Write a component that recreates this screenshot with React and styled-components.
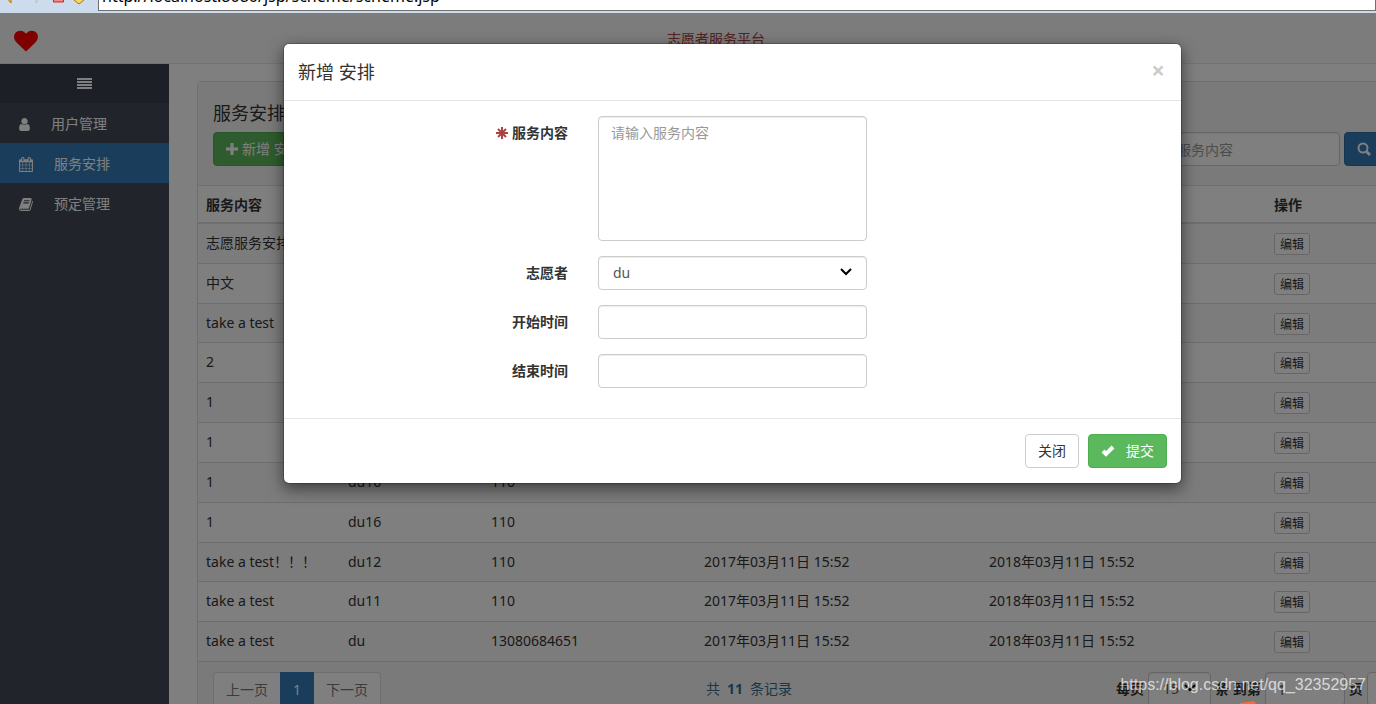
import { useState } from "react";
import styled, { createGlobalStyle, css } from "styled-components";

const GlobalStyled = createGlobalStyle`
* {
  margin: 0;
  padding: 0;
  box-sizing: border-box;
}
body {
  overflow: hidden;
  font-family: "Noto Sans", "Noto Sans CJK SC", sans-serif;
  font-size: 14px;
  line-height: 20px;
  color: #333333;
  background-color: #ffffff;
}
button, input, select, textarea {
  font: inherit;
  color: inherit;
}
`;

const Shell = styled.div`
  display: flex;
  flex-direction: column;
  height: 100vh;
  overflow: hidden;
`;

/* browser strip */
const AddressBar = styled.div`
  display: flex;
  align-items: flex-end;
  flex: none;
  height: 13px;
  padding-bottom: 2px;
  overflow: hidden;
  background-color: #cddcec;
`;
const BarIcons = styled.svg`
  flex: none;
  width: 98px;
  height: 11px;
`;
const Address = styled.input`
  flex: 1;
  height: 28px;
  padding: 0 3px 2px;
  border: 1px solid #707070;
  background-color: #ffffff;
  color: #000000;
  font-size: 16px;
`;

/* page */
const Viewport = styled.div`
  position: relative;
  flex: 1;
  min-height: 0;
  overflow: hidden;
`;
const Page = styled.div`
  display: flex;
  flex-direction: column;
  width: calc(100% + 90px);
  height: 100%;
`;
const TopBar = styled.header`
  display: flex;
  align-items: center;
  flex: none;
  height: 51px;
  padding: 2px 88px 0 14px;
  background-color: #f8f8f8;
  border-bottom: 1px solid #e7e7e7;
`;
const Brand = styled.a`
  display: flex;
  padding: 3px 16px 0 0;
  color: #ff0000;
`;
const SiteTitle = styled.h1`
  flex: 1;
  text-align: center;
  font-size: 14px;
  font-weight: normal;
  color: #a94442;
`;
const Columns = styled.div`
  display: flex;
  flex: 1;
  min-height: 0;
`;
const Sidebar = styled.nav`
  flex: none;
  width: 169px;
  background-color: #434b57;
`;
const SidebarToggle = styled.button`
  display: flex;
  justify-content: center;
  align-items: center;
  width: 100%;
  height: 39px;
  border: none;
  background-color: #38404d;
  color: #ffffff;
`;
const SideLink = styled.a`
  display: flex;
  align-items: center;
  gap: 21px;
  height: 40px;
  padding: 2px 0 0 19px;
  color: #ffffff;
  text-decoration: none;
  background-color: ${(props) => (props.$active ? "#337ab7" : "#434b57")};
`;
const Main = styled.main`
  flex: 1;
  padding: 17px 28px 0;
`;
const Panel = styled.section`
  border: 1px solid #dddddd;
  border-radius: 4px;
`;
const PanelHeading = styled.div`
  padding: 21px 15px 19px;
  background-color: #f5f5f5;
`;
const PanelTitle = styled.h2`
  margin-bottom: 9px;
  font-size: 18px;
  font-weight: normal;
`;
const Tools = styled.div`
  display: flex;
  justify-content: space-between;
`;
const Search = styled.form`
  display: flex;
  gap: 4px;
  width: 300px;
`;

const Button = styled.button`
  display: inline-flex;
  justify-content: center;
  align-items: center;
  flex: none;
  gap: 4px;
  height: 34px;
  padding: 0 12px;
  border: 1px solid #cccccc;
  border-radius: 4px;
  background-color: #ffffff;
  cursor: pointer;

  ${(props) =>
    props.$width &&
    css`
      justify-content: flex-start;
      width: ${props.$width};
    `}
  ${(props) =>
    props.$kind === "success" &&
    css`
      color: #ffffff;
      background-color: #5cb85c;
      border-color: #4cae4c;
    `}
  ${(props) =>
    props.$kind === "primary" &&
    css`
      color: #ffffff;
      background-color: #337ab7;
      border-color: #2e6da4;
    `}
  ${(props) =>
    props.$small &&
    css`
      height: 22px;
      padding: 2px 5px 0;
      border-radius: 3px;
      font-size: 12px;
      line-height: 18px;
    `}
`;

const field = css`
  width: ${(props) => props.$width || "100%"};
  height: 34px;
  padding: 6px 12px;
  border: 1px solid #cccccc;
  border-radius: 4px;
  background-color: #ffffff;
  color: #555555;
  box-shadow: inset 0 1px 1px rgba(0, 0, 0, 0.075);

  &::placeholder {
    color: #999999;
  }
`;
const Input = styled.input`
  ${field}
`;
const TextArea = styled.textarea`
  ${field}
  display: block;
  height: 125px;
  resize: none;
`;
const SelectBox = styled.div`
  position: relative;
  display: flex;
`;
const Select = styled.select`
  ${field}
  padding: 0 14px;
  appearance: none;
`;
const Arrow = styled.svg`
  position: absolute;
  top: 11px;
  right: 14px;
  width: 14px;
  height: 10px;
  pointer-events: none;
`;

const Table = styled.table`
  width: 100%;
  height: 477px;
  table-layout: fixed;
  border-collapse: collapse;
  border-top: 1px solid #dddddd;
`;
const Th = styled.th`
  width: ${(props) => props.$width};
  padding: 9px 8px 7px;
  text-align: left;
  border-bottom: 2px solid #dddddd;
`;
const Row = styled.tr`
  &:nth-child(odd) {
    background-color: #f9f9f9;
  }
`;
const Td = styled.td`
  padding: 9px 8px 7px;
  vertical-align: top;
  white-space: nowrap;
  border-bottom: 1px solid #dddddd;
`;
const EditCell = styled(Td)`
  line-height: 0;
`;

const PanelFooter = styled.div`
  display: flex;
  padding: 10px 15px;
  background-color: #f5f5f5;
`;
const Pager = styled.div`
  display: flex;
  flex: none;
  width: 493px;
`;
const PageLink = styled.a`
  height: 34px;
  padding: 7px 12px 5px;
  text-decoration: none;
  color: ${(props) => (props.$active ? "#ffffff" : "#777777")};
  background-color: ${(props) => (props.$active ? "#337ab7" : "#ffffff")};
  border: 1px solid ${(props) => (props.$active ? "#337ab7" : "#dddddd")};

  &:first-child {
    border-right: none;
    border-radius: 4px 0 0 4px;
  }
  &:last-child {
    border-left: none;
    border-radius: 0 4px 4px 0;
  }
`;
const Total = styled.p`
  display: flex;
  flex: none;
  gap: 7px;
  width: 410px;
  padding-top: 7px;
  color: #31708f;
`;
const PageSize = styled.div`
  display: flex;
  align-items: center;
  flex: none;
  gap: 4px;
`;
const PageLabel = styled.label`
  font-weight: bold;
`;

/* dialog */
const Overlay = styled.div`
  position: absolute;
  top: 0;
  left: 0;
  width: calc(100% + 89px);
  height: 100%;
  background-color: rgba(0, 0, 0, 0.5);
`;
const Dialog = styled.div`
  width: 899px;
  margin: 30px auto;
  border: 1px solid rgba(0, 0, 0, 0.2);
  border-radius: 6px;
  background-color: #ffffff;
  background-clip: padding-box;
  box-shadow: 0 5px 15px rgba(0, 0, 0, 0.5);
`;
const DialogHeader = styled.div`
  display: flex;
  justify-content: space-between;
  align-items: center;
  padding: 15px 15px 15px 14px;
  border-bottom: 1px solid #e5e5e5;
`;
const DialogTitle = styled.h2`
  font-size: 18px;
  line-height: 26px;
  font-weight: normal;
`;
const Close = styled.button`
  height: 26px;
  padding: 0 1px 5px;
  border: none;
  background: none;
  font-size: 24px;
  line-height: 21px;
  font-weight: bold;
  color: #000000;
  opacity: 0.2;
  cursor: pointer;
`;
const DialogBody = styled.div`
  padding: 15px 0;
`;
const FormRow = styled.div`
  display: grid;
  grid-template-columns: repeat(3, 1fr);
  margin-bottom: 15px;
`;
const Label = styled.label`
  display: flex;
  justify-content: flex-end;
  align-items: flex-start;
  gap: 4px;
  padding: 7px 15px 0;
  font-weight: bold;
`;
const Control = styled.div`
  padding: 0 15px;
`;
const Star = styled.svg`
  width: 12px;
  height: 12px;
  margin-top: 4px;
`;
const DialogFooter = styled.div`
  display: flex;
  justify-content: flex-end;
  gap: 9px;
  padding: 15px 14px 15px 15px;
  border-top: 1px solid #e5e5e5;
`;
const ButtonText = styled.span`
  padding-left: 7px;
`;

const Watermark = styled.div`
  position: absolute;
  right: 10px;
  bottom: 9px;
  font-family: "Liberation Sans", sans-serif;
  font-size: 16px;
  color: rgba(255, 255, 255, 0.7);
`;
const Sliver = styled.svg`
  position: absolute;
  right: 119px;
  bottom: 0;
  width: 17px;
  height: 3px;
`;

const icons = {
  heart: {
    box: "0 0 1792 1792",
    width: 24,
    height: 24,
    d: "M896 1664q-26 0-44-18l-624-602q-10-8-27.5-26t-55.5-65.5-68-97.5-53.5-121-23.5-138q0-220 127-344t351-124q62 0 126.5 21.5t120 58 95.5 68.5 76 68q36-36 76-68t95.5-68.5 120-58 126.5-21.5q224 0 351 124t127 344q0 221-229 450l-623 600q-18 18-44 18z",
  },
  user: {
    box: "256 0 1280 1792",
    width: 11,
    height: 15,
    d: "M1536 1399q0 109-62.5 187t-150.5 78h-854q-88 0-150.5-78t-62.5-187q0-85 8.5-160.5t31.5-152 58.5-131 94-89 134.5-34.5q131 128 313 128t313-128q76 0 134.5 34.5t94 89 58.5 131 31.5 152 8.5 160.5zm-256-887q0 159-112.5 271.5t-271.5 112.5-271.5-112.5-112.5-271.5 112.5-271.5 271.5-112.5 271.5 112.5 112.5 271.5z",
  },
  calendar: {
    box: "64 0 1664 1792",
    width: 14,
    height: 15,
    d: "M192 1664h288v-288h-288v288zm352 0h320v-288h-320v288zm-352-352h288v-320h-288v320zm352 0h320v-320h-320v320zm-352-384h288v-288h-288v288zm736 736h320v-288h-320v288zm-384-736h320v-288h-320v288zm768 736h288v-288h-288v288zm-384-352h320v-320h-320v320zm-352-864v-288q0-13-9.5-22.5t-22.5-9.5h-64q-13 0-22.5 9.5t-9.5 22.5v288q0 13 9.5 22.5t22.5 9.5h64q13 0 22.5-9.5t9.5-22.5zm736 864h288v-320h-288v320zm-384-384h320v-288h-320v288zm384 0h288v-288h-288v288zm32-480v-288q0-13-9.5-22.5t-22.5-9.5h-64q-13 0-22.5 9.5t-9.5 22.5v288q0 13 9.5 22.5t22.5 9.5h64q13 0 22.5-9.5t9.5-22.5zm384-64v1280q0 52-38 90t-90 38h-1408q-52 0-90-38t-38-90v-1280q0-52 38-90t90-38h128v-96q0-66 47-113t113-47h64q66 0 113 47t47 113v96h384v-96q0-66 47-113t113-47h64q66 0 113 47t47 113v96h128q52 0 90 38t38 90z",
  },
  book: {
    box: "64 0 1664 1792",
    width: 14,
    height: 15,
    d: "M1703 478q40 57 18 129l-275 906q-19 64-76.5 107.5t-122.5 43.5h-923q-77 0-148.5-53.5t-99.5-131.5q-24-67-2-127 0-4 3-27t4-37q1-8-3-21.5t-3-19.5q2-11 8-21t16.5-23.5 16.5-23.5q23-38 45-91.5t30-91.5q3-10 .5-30t-.5-28q3-11 17-28t17-23q21-36 42-92t25-90q1-9-2.5-32t.5-28q4-13 22-30.5t22-22.5q19-26 42.5-84.5t27.5-96.5q1-8-3-25.5t-2-26.5q2-8 9-18t18-23 17-21q8-12 16.5-30.5t15-35 16-36 19.5-32 26.5-23.5 36-11.5 47.5 5.5l-1 3q38-9 51-9h761q74 0 114 56t18 130l-274 906q-36 119-71.5 153.5t-128.5 34.5h-869q-27 0-38 15-11 16-1 43 24 70 144 70h923q29 0 56-15.5t35-41.5l300-987q7-22 5-57 38 15 59 43zm-1064 2q-4 13 2 22.5t20 9.5h608q13 0 25.5-9.5t16.5-22.5l21-64q4-13-2-22.5t-20-9.5h-608q-13 0-25.5 9.5t-16.5 22.5zm-83 256q-4 13 2 22.5t20 9.5h608q13 0 25.5-9.5t16.5-22.5l21-64q4-13-2-22.5t-20-9.5h-608q-13 0-25.5 9.5t-16.5 22.5z",
  },
};

const Icon = ({ name }) => {
  const { box, width, height, d } = icons[name];
  return (
    <svg width={width} height={height} viewBox={box} fill="currentColor" aria-hidden="true">
      <path d={d} />
    </svg>
  );
};

const Chevron = () => (
  <Arrow viewBox="0 0 14 10" aria-hidden="true">
    <path d="M2 2l5 5 5-5" fill="none" stroke="#000000" strokeWidth="2" />
  </Arrow>
);

const menu = [
  { icon: "user", text: "用户管理" },
  { icon: "calendar", text: "服务安排", active: true },
  { icon: "book", text: "预定管理" },
];

const start = "2017年03月11日 15:52";
const end = "2018年03月11日 15:52";

const rows = [
  ["志愿服务安排", "", "", "", ""],
  ["中文", "", "", "", ""],
  ["take a test", "", "", "", ""],
  ["2", "", "", "", ""],
  ["1", "", "", "", ""],
  ["1", "", "", "", ""],
  ["1", "du16", "110", "", ""],
  ["1", "du16", "110", "", ""],
  ["take a test！！！", "du12", "110", start, end],
  ["take a test", "du11", "110", start, end],
  ["take a test", "du", "13080684651", start, end],
];

export default function App() {
  const [open, setOpen] = useState(true);

  const close = () => setOpen(false);

  return (
    <>
      <GlobalStyled />
      <Shell>
        <AddressBar>
          <BarIcons viewBox="0 0 98 11" aria-hidden="true">
            <path d="M6 -3l5 6V-3z" fill="#f4cf57" stroke="#a8731a" />
            <path d="M40 -3l-4 6V-3z" fill="#e4e4e4" stroke="#bdbdbd" />
            <path d="M53.500 -3h10v5h-10z" fill="#f28a8a" stroke="#cc2222" />
            <path d="M74 -2h9l1 2-5 4-5-4z" fill="#f8d763" stroke="#a8731a" />
          </BarIcons>
          <Address aria-label="URL" readOnly value="http://localhost:8080/jsp/scheme/scheme.jsp" />
        </AddressBar>

        <Viewport>
          <Page>
            <TopBar>
              <Brand href="#" aria-label="首页">
                <Icon name="heart" />
              </Brand>
              <SiteTitle>志愿者服务平台</SiteTitle>
            </TopBar>

            <Columns>
              <Sidebar>
                <SidebarToggle type="button" aria-label="菜单">
                  <svg width="15" height="12" viewBox="0 0 15 12" fill="currentColor">
                    <path d="M0 0h15v2H0zM0 3h15v2H0zM0 6h15v2H0zM0 9h15v2H0z" />
                  </svg>
                </SidebarToggle>
                {menu.map((item) => (
                  <SideLink key={item.text} href="#" $active={item.active}>
                    <Icon name={item.icon} />
                    {item.text}
                  </SideLink>
                ))}
              </Sidebar>

              <Main>
                <Panel>
                  <PanelHeading>
                    <PanelTitle>服务安排</PanelTitle>
                    <Tools>
                      <Button type="button" $kind="success" onClick={() => setOpen(true)}>
                        <svg width="12" height="12" viewBox="0 0 12 12" aria-hidden="true">
                          <path d="M6 0v12M0 6h12" stroke="currentColor" strokeWidth="3" />
                        </svg>
                        新增 安排
                      </Button>
                      <Search>
                        <Input aria-label="服务内容" placeholder="请输入服务内容" />
                        <Button type="button" $kind="primary" $width="78px" aria-label="搜索">
                          <svg width="14" height="14" viewBox="0 0 14 14" aria-hidden="true">
                            <g fill="none" stroke="currentColor" strokeWidth="2">
                              <circle cx="6" cy="6" r="4.500" />
                              <path d="M9 9l4 4" strokeWidth="3" />
                            </g>
                          </svg>
                        </Button>
                      </Search>
                    </Tools>
                  </PanelHeading>

                  <Table>
                    <thead>
                      <tr>
                        <Th $width="142px">服务内容</Th>
                        <Th $width="143px">志愿者</Th>
                        <Th $width="213px">联系电话</Th>
                        <Th $width="285px">开始时间</Th>
                        <Th $width="285px">结束时间</Th>
                        <Th>操作</Th>
                      </tr>
                    </thead>
                    <tbody>
                      {rows.map((row, i) => (
                        <Row key={i}>
                          {row.map((cell, j) => (
                            <Td key={j}>{cell}</Td>
                          ))}
                          <EditCell>
                            <Button type="button" $small>编辑</Button>
                          </EditCell>
                        </Row>
                      ))}
                    </tbody>
                  </Table>

                  <PanelFooter>
                    <Pager>
                      <PageLink href="#">上一页</PageLink>
                      <PageLink href="#" $active>1</PageLink>
                      <PageLink href="#">下一页</PageLink>
                    </Pager>
                    <Total>
                      <span>共</span>
                      <b>11</b>
                      <span>条记录</span>
                    </Total>
                    <PageSize>
                      <PageLabel htmlFor="size">每页</PageLabel>
                      <SelectBox>
                        <Select id="size" $width="63px" defaultValue="15">
                          <option>15</option>
                        </Select>
                        <Chevron />
                      </SelectBox>
                      <PageLabel htmlFor="page">条 到第</PageLabel>
                      <Input id="page" $width="80px" defaultValue="1" />
                      <PageLabel htmlFor="page">页</PageLabel>
                      <Button type="button" $width="54px" aria-label="确定" />
                    </PageSize>
                  </PanelFooter>
                </Panel>
              </Main>
            </Columns>
          </Page>

          {open && (
            <Overlay>
              <Dialog role="dialog" aria-labelledby="dialog-title">
                <DialogHeader>
                  <DialogTitle id="dialog-title">新增 安排</DialogTitle>
                  <Close type="button" onClick={close}>×</Close>
                </DialogHeader>
                <DialogBody>
                  <FormRow>
                    <Label htmlFor="content">
                      <Star viewBox="0 0 12 12" aria-hidden="true">
                        <path
                          d="M6 0v12M0 6h12M2 2l8 8M10 2l-8 8"
                          stroke="#a94442"
                          strokeWidth="2"
                        />
                      </Star>
                      服务内容
                    </Label>
                    <Control>
                      <TextArea id="content" placeholder="请输入服务内容" />
                    </Control>
                  </FormRow>
                  <FormRow>
                    <Label htmlFor="volunteer">志愿者</Label>
                    <Control>
                      <SelectBox>
                        <Select id="volunteer" defaultValue="du">
                          <option>du</option>
                        </Select>
                        <Chevron />
                      </SelectBox>
                    </Control>
                  </FormRow>
                  <FormRow>
                    <Label htmlFor="start">开始时间</Label>
                    <Control>
                      <Input id="start" />
                    </Control>
                  </FormRow>
                  <FormRow>
                    <Label htmlFor="end">结束时间</Label>
                    <Control>
                      <Input id="end" />
                    </Control>
                  </FormRow>
                </DialogBody>
                <DialogFooter>
                  <Button type="button" onClick={close}>关闭</Button>
                  <Button type="button" $kind="success">
                    <svg width="14" height="12" viewBox="0 0 14 12" aria-hidden="true">
                      <path d="M2 6l3 3 7-7" fill="none" stroke="currentColor" strokeWidth="4" />
                    </svg>
                    <ButtonText>提交</ButtonText>
                  </Button>
                </DialogFooter>
              </Dialog>
            </Overlay>
          )}
          <Sliver viewBox="0 0 17 3" aria-hidden="true">
            <path d="M0 2l14-2 2 3H0z" fill="#fc6b35" />
          </Sliver>
          <Watermark>https://blog.csdn.net/qq_32352957</Watermark>
        </Viewport>
      </Shell>
    </>
  );
}
